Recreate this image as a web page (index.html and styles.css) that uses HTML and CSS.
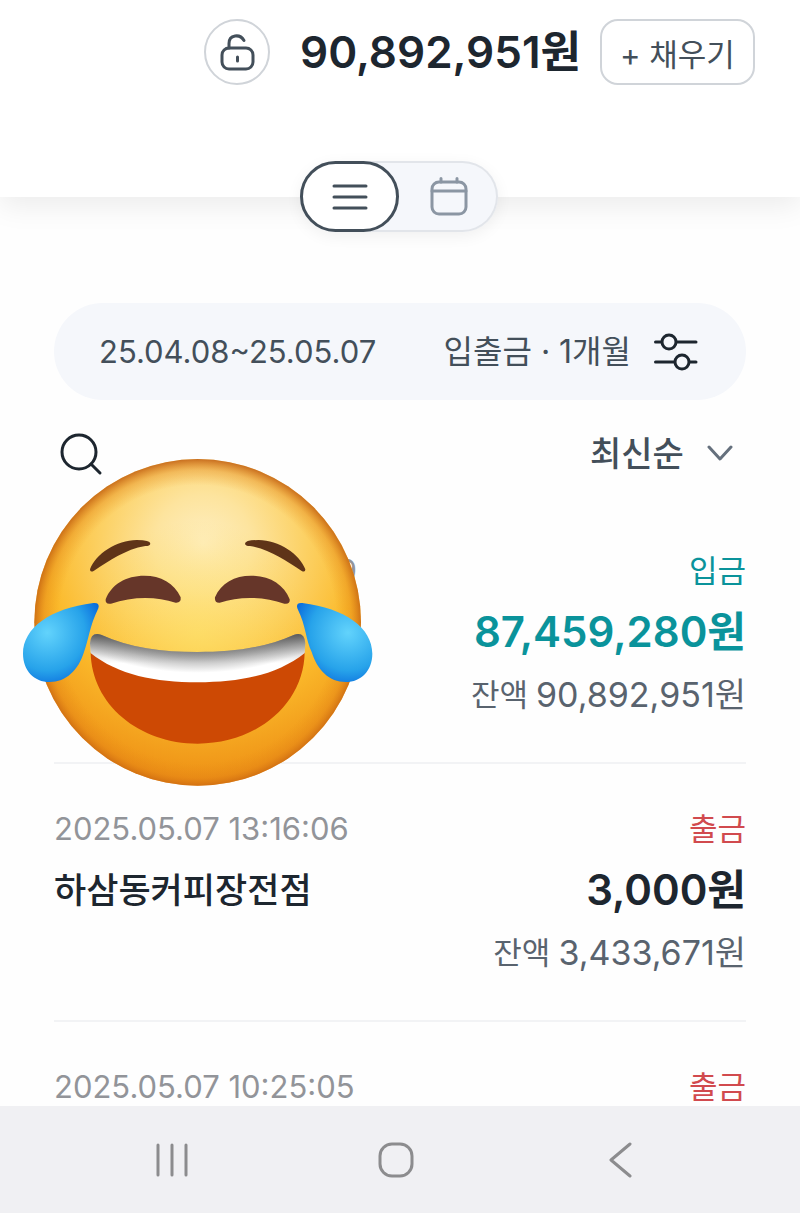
FILE: index.html
```html
<!DOCTYPE html>
<html lang="ko">
<head>
  <meta charset="UTF-8">
  <meta name="viewport" content="width=device-width, initial-scale=1.0">
  <title>거래내역</title>
  <link rel="stylesheet" href="styles.css">
</head>
<body>
  <header class="header">
    <div class="balance-row">
      <button class="lock-btn" aria-label="잠금">
        <svg width="36" height="40" viewBox="0 0 36 40" fill="none" stroke="#434f5a" stroke-width="3" stroke-linecap="round">
          <rect x="3" y="16" width="31" height="21" rx="7"/>
          <path d="M10 16V11.500C10 2.500 21 1.500 25 8.500M18.500 25V29"/>
        </svg>
      </button>
      <strong class="balance">90,892,951원</strong>
      <button class="fill-btn">+ 채우기</button>
    </div>

    <div class="view-toggle">
      <button class="toggle-btn active" aria-label="목록 보기">
        <svg width="36" height="28" viewBox="0 0 36 28" stroke="#434f5a" stroke-width="3" stroke-linecap="round">
          <path d="M2 3H34M2 14H34M2 25H34"/>
        </svg>
      </button>
      <button class="toggle-btn" aria-label="달력 보기">
        <svg width="40" height="40" viewBox="0 0 40 40" fill="none" stroke="#8b96a3" stroke-width="3" stroke-linecap="round">
          <rect x="3" y="5" width="34" height="32" rx="7"/>
          <path d="M3 14H37M12 1.500V5M28 1.500V5"/>
        </svg>
      </button>
    </div>
  </header>

  <main class="content">
    <button class="filter-bar">
      <span>25.04.08~25.05.07</span>
      <span class="filter-type">입출금 · 1개월</span>
      <svg width="44" height="40" viewBox="0 0 44 40" fill="#f5f7fb" stroke="#1d262f" stroke-width="3" stroke-linecap="round">
        <path d="M1.500 10H42M1.500 30H42"/>
        <circle cx="15" cy="10" r="7"/>
        <circle cx="28" cy="30" r="7"/>
      </svg>
    </button>

    <div class="sort-row">
      <button class="search-btn" aria-label="검색">
        <svg width="44" height="44" viewBox="0 0 44 44" fill="none" stroke="#1d262f" stroke-width="3" stroke-linecap="round">
          <circle cx="19" cy="20" r="17"/>
          <path d="M31 32L40 41"/>
        </svg>
      </button>
      <label class="sort">
        <select aria-label="정렬">
          <option>최신순</option>
        </select>
        <svg width="26" height="18" viewBox="0 0 26 18" fill="none" stroke="#65707d" stroke-width="3" stroke-linecap="round" stroke-linejoin="round">
          <path d="M2 2L13 14L24 2"/>
        </svg>
      </label>
    </div>

    <ul class="history">
      <li class="item">
        <div class="line">
          <span class="date covered">9</span>
          <span class="type in">입금</span>
        </div>
        <div class="line main-line">
          <strong class="amount in">87,459,280원</strong>
        </div>
        <div class="line rest"><span class="rest-label">잔액</span>90,892,951원</div>

        <!-- Laughing sticker -->
        <svg class="sticker" viewBox="36 81 1056 990">
          <defs>
            <radialGradient id="face" gradientUnits="userSpaceOnUse" cx="580" cy="340" r="730">
              <stop offset="0" stop-color="#feeec0"/>
              <stop offset=".2" stop-color="#fde49e"/>
              <stop offset=".42" stop-color="#fcd164"/>
              <stop offset=".65" stop-color="#fbba2b"/>
              <stop offset="1" stop-color="#ed8d13"/>
            </radialGradient>
            <radialGradient id="glow" gradientUnits="userSpaceOnUse" cx="563" cy="610" r="340">
              <stop offset="0" stop-color="#ffe35c" stop-opacity=".5"/>
              <stop offset="1" stop-color="#ffd63c" stop-opacity="0"/>
            </radialGradient>
            <radialGradient id="rim" gradientUnits="userSpaceOnUse" cx="563" cy="582" r="496">
              <stop offset=".84" stop-color="#e58a16" stop-opacity="0"/>
              <stop offset=".93" stop-color="#de7d15" stop-opacity=".35"/>
              <stop offset="1" stop-color="#bd590f" stop-opacity=".85"/>
            </radialGradient>
            <radialGradient id="teeth" gradientUnits="userSpaceOnUse" cx="563" cy="-169" r="930">
              <stop offset=".86" stop-color="#666"/>
              <stop offset=".898" stop-color="#858585"/>
              <stop offset=".93" stop-color="#c8c8c8"/>
              <stop offset=".965" stop-color="#fff"/>
            </radialGradient>
            <linearGradient id="teeth-shade" gradientUnits="userSpaceOnUse" x1="0" y1="612" x2="0" y2="700">
              <stop offset="0" stop-color="#555" stop-opacity=".9"/>
              <stop offset=".35" stop-color="#777" stop-opacity=".6"/>
              <stop offset="1" stop-color="#aaa" stop-opacity="0"/>
            </linearGradient>
            <radialGradient id="tear-left" gradientUnits="userSpaceOnUse" cx="112" cy="608" r="175">
              <stop offset="0" stop-color="#62d3fc"/>
              <stop offset=".65" stop-color="#27a3ea"/>
              <stop offset="1" stop-color="#0868dc"/>
            </radialGradient>
            <radialGradient id="tear-right" gradientUnits="userSpaceOnUse" cx="1014" cy="608" r="175">
              <stop offset="0" stop-color="#62d3fc"/>
              <stop offset=".65" stop-color="#27a3ea"/>
              <stop offset="1" stop-color="#0868dc"/>
            </radialGradient>
            <path id="teeth-shape" d="M240 640Q242 605 273 614C360 653 455 666 563 666C671 666 766 653 853 614Q884 605 886 640L884 669C802 735 690 757 563 757C436 757 324 735 242 669Z"/>
          </defs>
          <circle cx="563" cy="577" r="490" fill="url(#face)"/>
          <circle cx="563" cy="610" r="340" fill="url(#glow)"/>
          <circle cx="563" cy="577" r="490" fill="url(#rim)"/>
          <g fill="#5f3418">
            <path d="M240 418C257 372 320 330 380 330Q421 330 421 341Q420 348 406 348C345 358 300 392 252 422Q240 429 240 418Z"/>
            <path d="M886 418C869 372 806 330 746 330Q705 330 705 341Q706 348 720 348C781 358 826 392 874 422Q886 429 886 418Z"/>
          </g>
          <g fill="#663629">
            <path d="M287 508C304 463 348 437 403 437C452 437 493 459 512 502Q514 519 497 518C438 498 366 499 303 521Q285 524 287 508Z"/>
            <path d="M839 508C822 463 778 437 723 437C674 437 633 459 615 502Q613 519 629 518C688 498 760 499 823 521Q841 524 839 508Z"/>
          </g>
          <path d="M242 666C244 824 388 941 563 941C738 941 882 824 884 666L820 700H310Z" fill="#cd4904"/>
          <use href="#teeth-shape" fill="url(#teeth)"/>
          <use href="#teeth-shape" fill="url(#teeth-shade)"/>
          <path d="M264 522Q268 527 265 535C238 590 236 630 222 666C205 721 168 756 119 756C72 756 39 721 39 671C39 594 121 535 250 519Q260 518 264 522Z" fill="url(#tear-left)"/>
          <path d="M863 522Q859 527 862 535C889 590 887 630 905 666C922 721 958 756 1007 756C1054 756 1087 721 1087 671C1087 594 1006 535 877 519Q867 518 863 522Z" fill="url(#tear-right)"/>
        </svg>
      </li>

      <li class="item">
        <div class="line">
          <span class="date">2025.05.07 13:16:06</span>
          <span class="type out">출금</span>
        </div>
        <div class="line main-line">
          <span class="name">하삼동커피장전점</span>
          <strong class="amount">3,000원</strong>
        </div>
        <div class="line rest"><span class="rest-label">잔액</span>3,433,671원</div>
      </li>

      <li class="item">
        <div class="line">
          <span class="date">2025.05.07 10:25:05</span>
          <span class="type out">출금</span>
        </div>
      </li>
    </ul>
  </main>

  <nav class="system-nav">
    <button aria-label="최근 앱">
      <svg width="36" height="36" viewBox="0 0 36 36" stroke="#8c8c8e" stroke-width="3" stroke-linecap="round">
        <path d="M4 3V33M18 3V33M32 3V33"/>
      </svg>
    </button>
    <button aria-label="홈">
      <svg width="36" height="36" viewBox="0 0 36 36" fill="none" stroke="#8c8c8e" stroke-width="3">
        <rect x="2" y="2" width="32" height="32" rx="12"/>
      </svg>
    </button>
    <button aria-label="뒤로">
      <svg width="36" height="36" viewBox="0 0 36 36" fill="none" stroke="#8c8c8e" stroke-width="3" stroke-linecap="round" stroke-linejoin="round">
        <path d="M28 2L9 18L28 34"/>
      </svg>
    </button>
  </nav>
</body>
</html>
```

FILE: styles.css
```css
/* Base Styles */
* {
  box-sizing: border-box;
}

body {
  margin: 0;
  min-height: 100vh;
  display: flex;
  flex-direction: column;
  font-family: Inter, 'Noto Sans CJK KR', sans-serif;
  font-size: 31px;
  color: #434f5a;
  background: #fefefe;
}

button,
select {
  padding: 0;
  border: none;
  background: none;
  font: inherit;
  color: inherit;
  cursor: pointer;
}

svg {
  display: block;
  flex-shrink: 0;
}

/* Header */
.header {
  height: 197px;
  padding: 19px 45px 0;
  display: flex;
  flex-direction: column;
  justify-content: space-between;
  background: #fff;
  box-shadow: 0 8px 28px rgba(0, 0, 0, 0.08);
}

.balance-row {
  display: flex;
  align-items: center;
  justify-content: flex-end;
}

.lock-btn {
  width: 66px;
  height: 66px;
  display: flex;
  align-items: center;
  justify-content: center;
  border: 2px solid #d0d4d9;
  border-radius: 50%;
}

.balance {
  margin: 0 19px 0 30px;
  font-size: 44px;
  line-height: 66px;
  font-weight: 600;
  color: #1d262f;
}

.fill-btn {
  width: 155px;
  height: 66px;
  border: 2px solid #d0d4d9;
  border-radius: 18px;
  white-space: nowrap;
}

.view-toggle {
  align-self: center;
  display: flex;
  width: 198px;
  height: 71px;
  margin-right: 2px;
  margin-bottom: -35px;
  border-radius: 36px;
  background: #f5f7fb;
  box-shadow: inset 0 0 0 2px #e2e5ea, 0 4px 16px rgba(0, 0, 0, 0.06);
}

.toggle-btn {
  width: 50%;
  display: flex;
  align-items: center;
  justify-content: center;
  border-radius: 36px;
}

.toggle-btn.active {
  border: 3px solid #434f5a;
  background: #fff;
}

/* Filter */
.content {
  flex: 1;
  padding: 106px 54px 0;
}

.filter-bar {
  width: 100%;
  height: 97px;
  padding: 0 48px 0 45px;
  display: flex;
  align-items: center;
  border-radius: 49px;
  background: #f5f7fb;
  white-space: nowrap;
}

.filter-type {
  margin: 0 23px 0 auto;
  font-size: 32px;
  line-height: 40px;
}

.sort-row {
  height: 54px;
  margin: 27px 0 25px;
  padding: 0 13px 0 6px;
  display: flex;
  align-items: center;
  justify-content: space-between;
}

.sort {
  display: flex;
  align-items: center;
  gap: 23px;
}

.sort select {
  appearance: none;
  font-size: 34px;
  font-weight: 500;
  line-height: 54px;
}

/* History */
.history {
  margin: 0;
  padding: 0;
  list-style: none;
}

.item {
  position: relative;
  padding: 46px 0;
  display: flex;
  flex-direction: column;
  gap: 12px;
  border-bottom: 2px solid #f2f3f5;
}

.item:last-child {
  padding-bottom: 0;
  border-bottom: none;
}

.line {
  display: flex;
  align-items: center;
  justify-content: space-between;
  line-height: 38px;
}

.date {
  color: #929499;
}

.covered {
  width: 303px;
  text-align: right;
}

.main-line {
  justify-content: flex-end;
  line-height: 60px;
}

.name {
  margin-right: auto;
  font-size: 35px;
  font-weight: 500;
  color: #1d262f;
}

.amount {
  font-size: 42px;
  font-weight: 600;
  color: #1d262f;
}

.in {
  color: #0a939b;
}

.out {
  color: #d14a4e;
}

.rest {
  justify-content: flex-end;
  gap: 8px;
  font-size: 34px;
  line-height: 42px;
  color: #59636e;
}

.rest-label {
  font-size: 31px;
}

.sticker {
  position: absolute;
  left: -32px;
  top: -49px;
  width: 352px;
  height: 330px;
}

/* System navigation */
.system-nav {
  height: 107px;
  padding: 0 68px 0 60px;
  display: grid;
  grid-template-columns: repeat(3, 1fr);
  background: #f0f0f3;
}

.system-nav button {
  display: flex;
  align-items: center;
  justify-content: center;
}
```
